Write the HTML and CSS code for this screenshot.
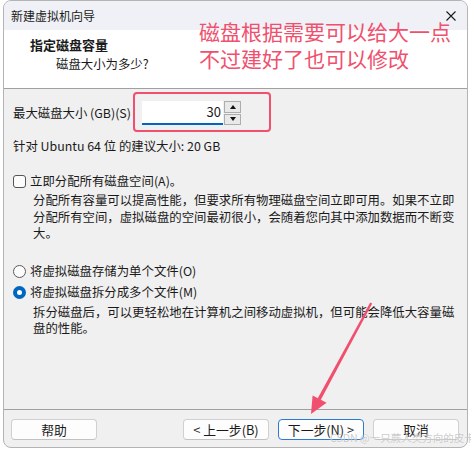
FILE: index.html
```html
<!DOCTYPE html>
<html lang="zh-cn">

<head>
    <meta charset="UTF-8">
    <meta name="viewport" content="width=device-width, initial-scale=1.0">
    <title>新建虚拟机向导</title>
    <link rel="stylesheet" href="styles.css">
</head>

<body>
    <div class="window">
        <div class="titlebar">
            <span class="title">新建虚拟机向导</span>
            <svg class="close" width="10" height="10" viewBox="0 0 10 10">
                <path d="M0.5 0.5 L9.5 9.5 M9.5 0.5 L0.5 9.5" stroke="#1a1a1a" stroke-width="1.1" fill="none" />
            </svg>
        </div>
        <div class="header">
            <div class="head-title">指定磁盘容量</div>
            <div class="head-sub">磁盘大小为多少?</div>
        </div>
        <div class="content">
            <div class="size-row">
                <label class="size-label">最大磁盘大小 (GB)(S)</label>
                <div class="size-input">30</div>
                <div class="spinner">
                    <div class="spin up"><span class="tri-up"></span></div>
                    <div class="spin down"><span class="tri-down"></span></div>
                </div>
                <div class="highlight"></div>
            </div>
            <div class="hint">针对 Ubuntu 64 位 的建议大小: 20 GB</div>

            <div class="check-row">
                <span class="checkbox"></span>
                <span>立即分配所有磁盘空间(A)。</span>
            </div>
            <div class="desc">分配所有容量可以提高性能，但要求所有物理磁盘空间立即可用。如果不立即<br>分配所有空间，虚拟磁盘的空间最初很小，会随着您向其中添加数据而不断变<br>大。</div>

            <div class="radio-row first">
                <span class="radio"></span>
                <span>将虚拟磁盘存储为单个文件(O)</span>
            </div>
            <div class="radio-row">
                <span class="radio checked"></span>
                <span>将虚拟磁盘拆分成多个文件(M)</span>
            </div>
            <div class="desc second">拆分磁盘后，可以更轻松地在计算机之间移动虚拟机，但可能会降低大容量磁<br>盘的性能。</div>
        </div>
        <div class="footer">
            <button class="btn">帮助</button>
            <div class="spacer"></div>
            <button class="btn">&lt; 上一步(B)</button>
            <button class="btn primary">下一步(N) &gt;</button>
            <button class="btn">取消</button>
        </div>
        <div class="note">磁盘根据需要可以给大一点<br>不过建好了也可以修改</div>
    </div>

    <svg class="arrow" width="471" height="449" viewBox="0 0 471 449">
        <path d="M370.2 302.6 L372.2 303.6 L320.6 400.2 L317.6 398.6 Z" fill="#f0506e" />
        <polygon points="311,414 312.6,395.4 326.6,402.8" fill="#f0506e" />
    </svg>
    <div class="watermark">CSDN @一只蕨人类方向的皮卡</div>
</body>

</html>
```

FILE: styles.css
```css
html,
body {
    margin: 0;
    background: #fff;
}

* {
    box-sizing: border-box;
}

body {
    position: relative;
    width: 471px;
    height: 449px;
    overflow: hidden;
    font-family: "Noto Sans CJK SC", sans-serif;
    font-size: 12.4px;
    color: #1a1a1a;
}

.window {
    position: relative;
    margin-left: 3px;
    width: 465px;
    height: 448px;
    border: 1px solid #b4b4b4;
    border-radius: 8px;
    background: #f0f0f0;
    display: flex;
    flex-direction: column;
    overflow: hidden;
}

.titlebar {
    height: 29px;
    background: #eff1f6;
    display: flex;
    align-items: center;
    justify-content: space-between;
    padding: 0 11px 0 7px;
}

.title {
    font-size: 12px;
    line-height: 16px;
}

.close {
    margin-top: 1px;
}

.header {
    height: 59px;
    background: #fff;
    border-bottom: 1px solid #a0a0a0;
    padding: 6px 0 0 26px;
}

.head-title {
    width: fit-content;
    font-size: 13px;
    font-weight: bold;
    line-height: 18px;
}

.head-sub {
    width: fit-content;
    margin-top: 1px;
    margin-left: 26px;
    line-height: 18px;
}

.content {
    flex: 1;
    padding: 12px 8px 0 9px;
}

.size-row {
    position: relative;
    display: flex;
    align-items: center;
    height: 24px;
}

.size-label {
    width: 129px;
    line-height: 17px;
    white-space: nowrap;
}

.size-input {
    width: 81px;
    height: 24px;
    background: #fff;
    border-bottom: 2px solid #0067c0;
    text-align: right;
    padding-right: 2px;
    line-height: 22px;
    font-size: 13px;
}

.spinner {
    margin-left: 1px;
    width: 17px;
    height: 24px;
    display: flex;
    flex-direction: column;
    gap: 1px;
}

.spin {
    flex: 1;
    background: #e9e9e9;
    border: 1px solid #adadad;
    display: flex;
    align-items: center;
    justify-content: center;
}

.tri-up {
    border-left: 3.5px solid transparent;
    border-right: 3.5px solid transparent;
    border-bottom: 4px solid #111;
}

.tri-down {
    border-left: 3.5px solid transparent;
    border-right: 3.5px solid transparent;
    border-top: 4px solid #111;
}

.highlight {
    position: absolute;
    left: 120px;
    top: -9px;
    width: 138px;
    height: 40px;
    border: 2px solid #f0506e;
    border-radius: 4px;
}

.hint {
    margin-top: 13px;
    line-height: 17px;
}

.check-row,
.radio-row {
    display: flex;
    align-items: center;
    gap: 4px;
    line-height: 17px;
}

.check-row {
    margin-top: 18px;
}

.checkbox {
    width: 13px;
    height: 13px;
    border: 1px solid #555;
    border-radius: 3px;
    background: #fcfcfc;
}

.desc {
    margin-top: 2px;
    margin-left: 20px;
    width: 430px;
    line-height: 16.5px;
    white-space: nowrap;
}

.desc.second {
    margin-top: 3px;
}

.radio-row.first {
    margin-top: 21px;
}

.radio-row + .radio-row {
    margin-top: 4px;
}

.radio {
    width: 13px;
    height: 13px;
    border: 1px solid #5a5a5a;
    border-radius: 50%;
    background: #fcfcfc;
}

.radio.checked {
    border: 4px solid #0067c0;
    background: #fff;
}

.footer {
    border-top: 1px solid #a0a0a0;
    padding: 9px 8px 0 7px;
    height: 38px;
    display: flex;
    gap: 9px;
}

.spacer {
    flex: 1;
}

.btn {
    width: 86px;
    height: 21px;
    padding: 0;
    font-family: inherit;
    font-size: 12.8px;
    line-height: 19px;
    color: #1a1a1a;
    background: #fdfdfd;
    border: 1px solid #d0d0d0;
    border-bottom-color: #c2c2c2;
    border-radius: 4px;
}

.btn.primary {
    border-color: #2b7bd0;
}

.note {
    position: absolute;
    left: 195px;
    top: 17px;
    font-size: 21px;
    line-height: 26.5px;
    color: #f0506e;
}

.arrow {
    position: absolute;
    left: 0;
    top: 0;
    pointer-events: none;
}

.watermark {
    position: absolute;
    left: 330px;
    top: 431px;
    font-size: 10.5px;
    line-height: 14px;
    white-space: nowrap;
    color: rgba(160, 160, 160, 0.55);
    text-shadow: 0 0 1px rgba(255, 255, 255, 0.8);
}
```
